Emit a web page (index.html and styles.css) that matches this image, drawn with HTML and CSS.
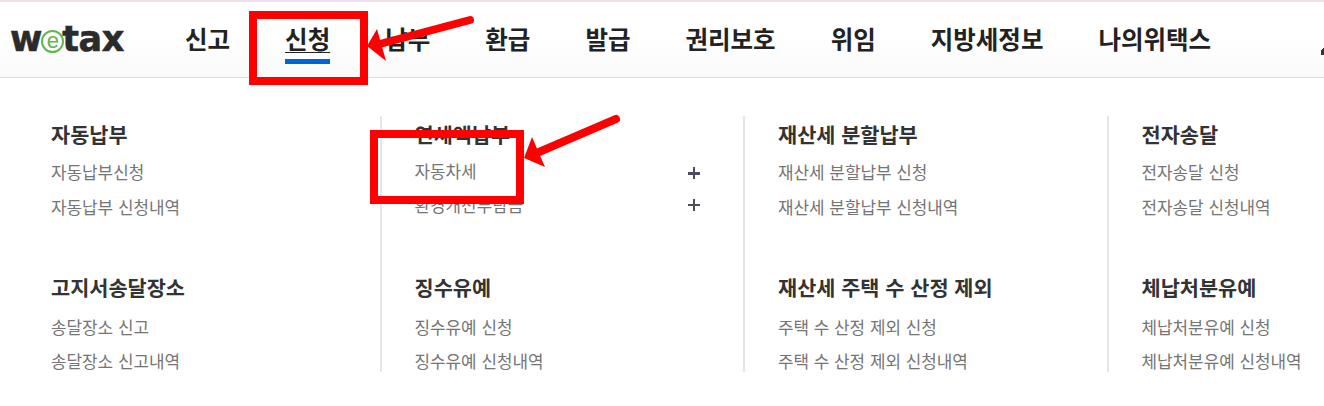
FILE: index.html
```html
<!DOCTYPE html>
<html lang="ko">
<head>
<meta charset="utf-8">
<title>wetax</title>
<link rel="stylesheet" href="styles.css">
</head>
<body>
<div class="page">
  <header class="header">
    <div class="logo"><span class="logo-w">w</span><span class="logo-e">e</span><span class="logo-tax">tax</span></div>
    <nav class="nav">
      <a class="nav-item">신고</a>
      <a class="nav-item active">신청</a>
      <a class="nav-item">납부</a>
      <a class="nav-item">환급</a>
      <a class="nav-item">발급</a>
      <a class="nav-item">권리보호</a>
      <a class="nav-item">위임</a>
      <a class="nav-item">지방세정보</a>
      <a class="nav-item">나의위택스</a>
    </nav>
    <div class="edge-mark"></div>
  </header>
  <main class="menu">
    <section class="col">
      <div class="group">
        <h2>자동납부</h2>
        <ul><li>자동납부신청</li><li>자동납부 신청내역</li></ul>
      </div>
      <div class="group">
        <h2>고지서송달장소</h2>
        <ul><li>송달장소 신고</li><li>송달장소 신고내역</li></ul>
      </div>
    </section>
    <section class="col">
      <div class="group">
        <h2>연세액납부</h2>
        <ul>
          <li class="plus-row">자동차세<span class="plus plus-first"></span></li>
          <li class="plus-row">환경개선부담금<span class="plus plus-second"></span></li>
        </ul>
      </div>
      <div class="group">
        <h2>징수유예</h2>
        <ul><li>징수유예 신청</li><li>징수유예 신청내역</li></ul>
      </div>
    </section>
    <section class="col">
      <div class="group">
        <h2>재산세 분할납부</h2>
        <ul><li>재산세 분할납부 신청</li><li>재산세 분할납부 신청내역</li></ul>
      </div>
      <div class="group">
        <h2>재산세 주택 수 산정 제외</h2>
        <ul><li>주택 수 산정 제외 신청</li><li>주택 수 산정 제외 신청내역</li></ul>
      </div>
    </section>
    <section class="col">
      <div class="group">
        <h2>전자송달</h2>
        <ul><li>전자송달 신청</li><li>전자송달 신청내역</li></ul>
      </div>
      <div class="group">
        <h2>체납처분유예</h2>
        <ul><li>체납처분유예 신청</li><li>체납처분유예 신청내역</li></ul>
      </div>
    </section>
  </main>
  <div class="mark mark-nav"></div>
  <div class="mark mark-item"></div>
  <svg class="arrows" width="1324" height="406" viewBox="0 0 1324 406" aria-hidden="true">
    <path class="shaft" d="M470 20 L376 45"/>
    <path class="head" d="M367 46 L377 29 L386 61 Z"/>
    <path class="shaft" d="M616 119 L532 155"/>
    <path class="head" d="M524 158 L532 137 L545 167 Z"/>
  </svg>
</div>
</body>
</html>
```
FILE: styles.css
```css
* { box-sizing: border-box; }
html, body { margin: 0; padding: 0; background: #fff; }
body { font-family: "Noto Sans CJK KR", "Noto Sans", sans-serif; }
.page { position: relative; width: 1324px; height: 406px; overflow: hidden; }
.header {
  position: relative;
  display: flex;
  align-items: center;
  height: 78px;
  padding: 2px 0 0 10px;
  border-bottom: 1px solid #dedede;
  background: linear-gradient(#fff 45%, #fafafa);
  box-shadow: inset 0 2px 0 #f0e0ea;
}
.logo {
  display: flex;
  align-items: baseline;
  width: 175px;
  margin-top: -2px;
  font-family: "DejaVu Sans", sans-serif;
  font-weight: 700;
  font-size: 35px;
  line-height: 40px;
  color: #2b2b2b;
  -webkit-text-stroke: 0.6px #2b2b2b;
}
.logo-w { letter-spacing: -2px; }
.logo-tax { letter-spacing: -0.5px; margin-left: -2px; }
.logo-e {
  display: flex;
  align-items: center;
  justify-content: center;
  align-self: center;
  flex: none;
  width: 23px;
  height: 23px;
  margin: 5px 0 0 1px;
  border: 2px solid #62b54f;
  border-radius: 50%;
  color: #62b54f;
  font-family: "Liberation Sans", sans-serif;
  font-size: 22px;
  font-weight: 400;
  line-height: 1;
  -webkit-text-stroke: 0;
}
.nav { display: flex; gap: 55px; margin-top: -1px; }
.nav-item {
  position: relative;
  font-size: 24.5px;
  font-weight: 700;
  line-height: 34px;
  color: #222;
  white-space: nowrap;
}
.nav-item.active {
  text-decoration: underline;
  text-decoration-thickness: 1px;
  text-underline-offset: 3px;
}
.nav-item.active::after {
  content: "";
  position: absolute;
  left: 0;
  right: 0;
  bottom: -8px;
  height: 5px;
  background: #0066d6;
}
.edge-mark {
  position: absolute;
  right: 0;
  top: 44px;
  width: 3px;
  height: 11px;
  background: linear-gradient(135deg, transparent 50%, #333 50%);
}
.menu {
  display: grid;
  grid-template-columns: repeat(4, 363.5px);
  padding: 38px 0 0 16px;
}
.col {
  display: flex;
  flex-direction: column;
  gap: 53px;
  height: 256px;
  padding: 3px 34px 0 33px;
  border-left: 2px solid #e6e6e6;
  white-space: nowrap;
}
.col:first-child { padding-left: 35px; border-left: 0; }
.group h2 {
  margin: 0 0 11px;
  font-size: 20.8px;
  font-weight: 700;
  line-height: 30px;
  color: #333;
}
.group + .group h2 { margin-bottom: 13px; }
.group ul { margin: 0; padding: 0; list-style: none; }
.group li {
  font-size: 16.9px;
  line-height: 24px;
  color: #757575;
  margin-bottom: 10.5px;
}
.group + .group li { margin-bottom: 10px; }
.group li:last-child { margin-bottom: 0; }
.group .plus-row {
  display: flex;
  align-items: center;
  justify-content: space-between;
  width: 285px;
  line-height: 22px;
  margin-bottom: 11.5px;
}
.group .plus-row:last-child { margin-bottom: 3px; }
.plus { position: relative; width: 12px; height: 12px; }
.plus-first { margin-top: 4px; }
.plus-second { margin-top: 0; }
.plus::before, .plus::after { content: ""; position: absolute; background: #4c4c5c; }
.plus::before { left: 0; right: 0; top: 5px; height: 2.5px; }
.plus::after { top: 0; bottom: 0; left: 5px; width: 2.5px; }
.mark { position: absolute; border: 8px solid #f00; }
.mark-nav { left: 249px; top: 11px; width: 119px; height: 74px; }
.mark-item { left: 370px; top: 130px; width: 154px; height: 74px; }
.arrows { position: absolute; left: 0; top: 0; pointer-events: none; }
.shaft { fill: none; stroke: #f00; stroke-width: 8; stroke-linecap: round; }
.head { fill: #f00; }
```
